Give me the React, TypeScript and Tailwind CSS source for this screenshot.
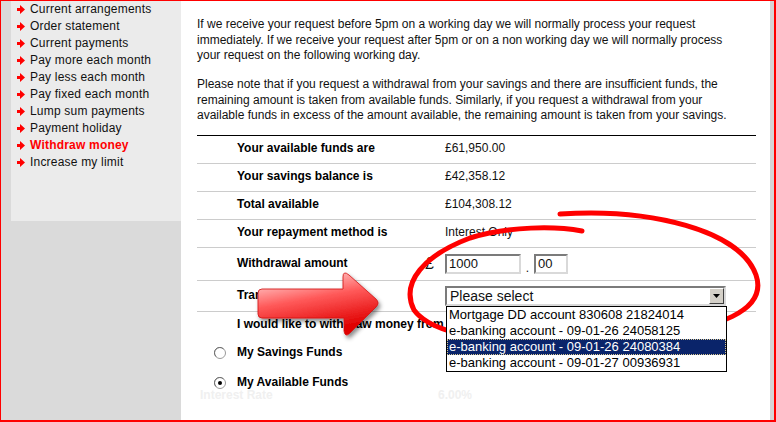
import React from "react";

const menu = [
  "Current arrangements",
  "Order statement",
  "Current payments",
  "Pay more each month",
  "Pay less each month",
  "Pay fixed each month",
  "Lump sum payments",
  "Payment holiday",
  "Withdraw money",
  "Increase my limit",
];

const summary = [
  { label: "Your available funds are", value: "£61,950.00" },
  { label: "Your savings balance is", value: "£42,358.12" },
  { label: "Total available", value: "£104,308.12" },
  { label: "Your repayment method is", value: "Interest Only" },
];

const accounts = [
  "Mortgage DD account 830608 21824014",
  "e-banking account - 09-01-26 24058125",
  "e-banking account - 09-01-26 24080384",
  "e-banking account - 09-01-27 00936931",
];

function MenuArrow() {
  return (
    <svg width="8" height="9" viewBox="0 0 8 9" className="shrink-0">
      <path d="M0 3H3V0L8 4.5L3 9V6H0Z" fill="#ff0000" />
    </svg>
  );
}

function Radio({ checked }: { checked?: boolean }) {
  return (
    <svg width="12" height="12" viewBox="0 0 12 12" className="shrink-0">
      <circle cx="6" cy="6" r="5.5" fill="#fff" stroke="#9a9a9a" />
      <path d="M2 9.5A5 5 0 0 1 9.5 2" fill="none" stroke="#6e6e6e" />
      {checked && <circle cx="6" cy="6" r="2" fill="#000" />}
    </svg>
  );
}

const inset =
  "border-2 border-t-[#7b7b7b] border-l-[#7b7b7b] border-b-[#d9d9d9] border-r-[#d9d9d9] bg-white";

export default function App() {
  return (
    <div className="relative w-[776px] h-[422px] overflow-hidden flex bg-white border-t border-l border-r-2 border-b-2 border-[#ff0000] font-['Liberation_Sans',Arial,sans-serif] text-[12px] text-[#111]">
      {/* sidebar */}
      <div className="w-[180px] shrink-0 bg-[#dadada] pl-[10px]">
        <ul className="h-[220px] bg-[#ebebeb] pl-[6px] leading-[17px]">
          {menu.map((m) => (
            <li key={m} className="flex items-center gap-[5px] tracking-[0.2px]">
              <MenuArrow />
              <span className={m === "Withdraw money" ? "font-bold text-[#ff0000]" : ""}>{m}</span>
            </li>
          ))}
        </ul>
      </div>

      {/* main */}
      <div className="flex-1 pl-[16px] pr-[14px] pt-[16px] leading-[15.5px]">
        <p className="whitespace-nowrap">
          If we receive your request before 5pm on a working day we will normally process your request
          <br />
          immediately. If we receive your request after 5pm or on a non working day we will normally process
          <br />
          your request on the following working day.
        </p>
        <p className="whitespace-nowrap mt-[13.5px]">
          Please note that if you request a withdrawal from your savings and there are insufficient funds, the
          <br />
          remaining amount is taken from available funds. Similarly, if you request a withdrawal from your
          <br />
          available funds in excess of the amount available, the remaining amount is taken from your savings.
        </p>

        <div className="mt-[11px] border-t border-black">
          {summary.map((r) => (
            <div key={r.label} className="h-[28px] flex items-center border-b border-[#cccccc]">
              <div className="w-[248px] pl-[40px] font-bold text-black">{r.label}</div>
              <div>{r.value}</div>
            </div>
          ))}

          <div className="h-[33px] flex items-center border-b border-[#cccccc]">
            <div className="w-[228px] pl-[40px] font-bold text-black">Withdrawal amount</div>
            <div className="w-[20px] text-[16px] leading-none">£</div>
            <div className={`${inset} w-[76px] h-[20px] pl-[2px] text-[13px] leading-[16px]`}>1000</div>
            <div className="w-[13px] text-center self-end pb-[6px] leading-none">.</div>
            <div className={`${inset} w-[34px] h-[20px] pl-[2px] text-[13px] leading-[16px]`}>00</div>
          </div>

          <div className="h-[31px] flex items-center border-b border-[#cccccc]">
            <div className="w-[248px] pl-[40px] font-bold text-black">Transfer to</div>
            <div className="relative">
              <div className={`${inset} w-[281px] h-[20px] flex items-center justify-between`}>
                <span className="pl-[3px] text-[14px] leading-none">Please select</span>
                <div className="w-[15px] h-[16px] bg-[#d4d0c8] border border-t-white border-l-white border-b-[#404040] border-r-[#404040] flex items-center justify-center">
                  <svg width="7" height="4" viewBox="0 0 7 4">
                    <path d="M0 0H7L3.5 4Z" fill="#000" />
                  </svg>
                </div>
              </div>
              <ul className="absolute z-20 left-[1px] top-[20px] w-[281px] border border-black bg-white text-[13px] leading-[16px]">
                {accounts.map((a, i) => (
                  <li
                    key={a}
                    className={
                      i === 2
                        ? "h-[16px] pl-[2px] bg-[#0a246a] text-white outline outline-1 outline-dotted outline-[#d8c890] -outline-offset-1"
                        : "h-[16px] pl-[2px] text-black"
                    }
                  >
                    {a}
                  </li>
                ))}
              </ul>
            </div>
          </div>

          <div className="h-[27px] flex items-center">
            <div className="pl-[40px] font-bold text-black">I would like to withdraw money from :</div>
          </div>
          <div className="h-[29px] flex items-center pl-[17px] gap-[11px]">
            <Radio />
            <span className="font-bold text-black">My Savings Funds</span>
          </div>
          <div className="h-[30px] flex items-center pl-[17px] gap-[11px]">
            <Radio checked />
            <span className="font-bold text-black">My Available Funds</span>
          </div>
          <div className="-mt-[10px] flex font-bold text-[#f0f0f0]">
            <div className="w-[241px] pl-[3px]">Interest Rate</div>
            <div>6.00%</div>
          </div>
        </div>
      </div>

      {/* scroll stripe */}
      <div className="w-[4px] shrink-0 bg-[#d6d6d6]" />

      {/* hand-drawn circle */}
      <svg className="absolute left-0 top-0 z-10 pointer-events-none" width="776" height="422">
        <g transform="translate(-1 -1)">
          <path
            d="M560 214C650 208 740 230 756 275C768 310 720 330 640 336C540 345 440 345 414 310C400 282 425 255 470 238C510 226 555 226 582 231"
            fill="none"
            stroke="#ff0000"
            strokeWidth="5"
            strokeLinecap="round"
          />
        </g>
      </svg>

      {/* big arrow */}
      <svg className="absolute left-0 top-0 z-30 pointer-events-none" width="776" height="422">
        <defs>
          <linearGradient id="arrowFill" x1="0" y1="0" x2="0.35" y2="1">
            <stop offset="0" stopColor="#fff0f0" />
            <stop offset="0.5" stopColor="#ff5a5a" />
            <stop offset="1" stopColor="#e00000" />
          </linearGradient>
          <filter id="arrowShadow" x="-20%" y="-20%" width="140%" height="150%">
            <feDropShadow dx="2" dy="3" stdDeviation="2" floodColor="#000" floodOpacity="0.45" />
          </filter>
        </defs>
        <g transform="translate(-1 -1)">
          <path
            d="M262 289L343 289L343 277Q343 270 349 275L376 299Q380 303 376 307L350 333Q345 338 344 331L344 318L262 318Q258 318 258 314L258 293Q258 289 262 289Z"
            fill="url(#arrowFill)"
            stroke="#d01010"
            strokeWidth="0.8"
            filter="url(#arrowShadow)"
          />
        </g>
      </svg>
    </div>
  );
}
